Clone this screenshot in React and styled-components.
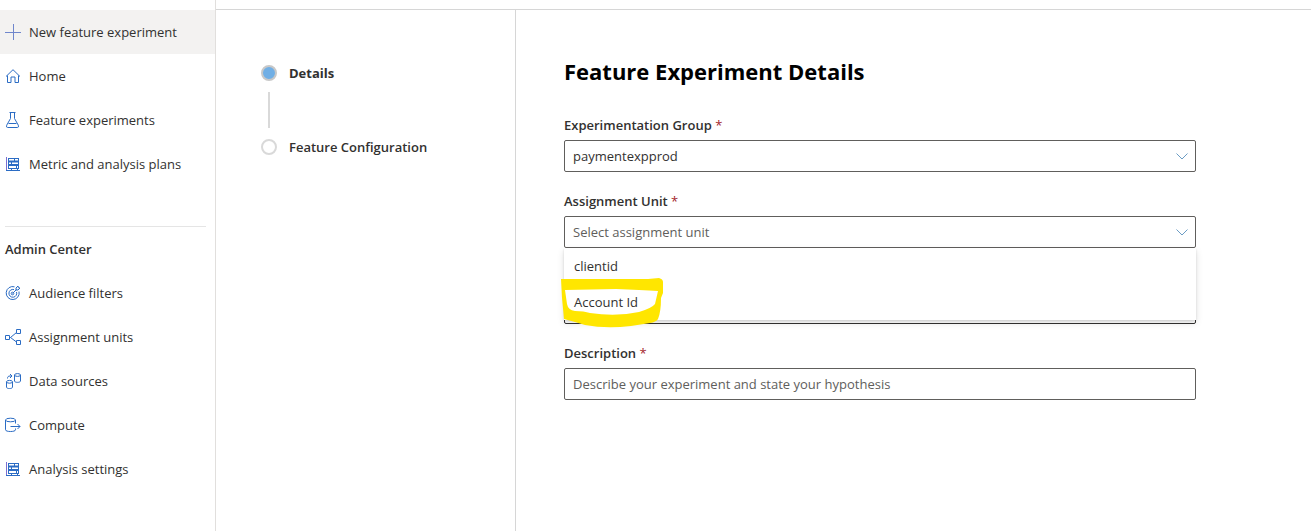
import React from "react";
import styled, { createGlobalStyle } from "styled-components";

const GlobalStyle = createGlobalStyle`
  *, *::before, *::after { box-sizing: border-box; }
  body {
    margin: 0;
    background: #fff;
    color: #323130;
    font: 400 13px/20px "Open Sans", "Noto Sans", sans-serif;
  }
  input, select, button { font: inherit; color: inherit; }
`;

const Page = styled.div`
  display: flex;
  min-height: 100vh;
`;

const Sidebar = styled.nav`
  flex: 0 0 216px;
  padding-top: 10px;
  border-right: 1px solid #e1dfdd;
`;

const NavLink = styled.a`
  display: flex;
  align-items: center;
  gap: 8px;
  height: 44px;
  padding-left: 5px;
  color: #323130;
  text-decoration: none;
  white-space: nowrap;
  background: ${(p) => (p.$active ? "#f3f2f1" : "transparent")};
`;

const NavHeading = styled.h2`
  margin: 0;
  padding-left: 5px;
  font-size: 13px;
  font-weight: 600;
  line-height: 44px;
`;

const Divider = styled.hr`
  margin: 40px 9px 0 5px;
  border: 0;
  border-top: 1px solid #e5e5e5;
`;

const NavIcon = styled.svg`
  flex: none;
  width: 16px;
  height: 16px;
  fill: none;
  stroke: #2b6cc4;
  stroke-width: 1;
`;

const Content = styled.div`
  display: flex;
  flex: 1;
  min-width: 0;
  margin-top: 9px;
  border-top: 1px solid #d6d6d6;
`;

const Stepper = styled.ol`
  flex: 0 0 300px;
  margin: 0;
  padding: 53px 0 0 45px;
  list-style: none;
  border-right: 1px solid #d6d6d6;
`;

const Step = styled.li`
  display: flex;
  align-items: center;
  gap: 12px;
  height: 20px;
  font-weight: ${(p) => (p.$current ? 700 : 600)};
`;

const StepDot = styled.span`
  width: 16px;
  height: 16px;
  border: 2px solid ${(p) => (p.$current ? "#c8c8c8" : "#d9d9d9")};
  border-radius: 50%;
  background: ${(p) => (p.$current ? "#71afe5" : "#fff")};
`;

const StepLine = styled.li`
  width: 2px;
  height: 36px;
  margin: 9px 0 9px 7px;
  background: #d9d9d9;
`;

const Main = styled.main`
  flex: 1;
  min-width: 0;
  padding: 45px 48px;
`;

const Title = styled.h1`
  margin: 0 0 28px;
  color: #000;
  font-size: 22px;
  font-weight: 700;
  line-height: 32px;
`;

const Form = styled.form`
  display: grid;
  gap: 19px;
  max-width: 632px;
`;

const Field = styled.div`
  display: flex;
  flex-direction: column;
  justify-content: flex-end;
  min-height: 57px;
`;

const Label = styled.label`
  margin-bottom: 5px;
  font-weight: 600;
`;

const Required = styled.span`
  color: #a4262c;
  font-weight: 400;
`;

const Control = styled.div`
  position: relative;
`;

const TextInput = styled.input`
  display: block;
  width: 100%;
  height: 32px;
  padding: 0 8px;
  border: 1px solid ${(p) => (p.$strong ? "#323130" : "#605e5c")};
  border-radius: 2px;
  background: #fff;
  outline: none;
  &::placeholder { color: #605e5c; opacity: 1; }
`;

const Select = styled.select`
  display: block;
  width: 100%;
  height: 32px;
  padding: 0 32px 0 8px;
  border: 1px solid #605e5c;
  border-radius: 2px;
  background: #fff;
  color: ${(p) => (p.$empty ? "#605e5c" : "#323130")};
  appearance: none;
  outline: none;
`;

const Chevron = styled.svg`
  position: absolute;
  top: 12px;
  right: 8px;
  width: 12px;
  height: 8px;
  fill: none;
  stroke: #6b9cc4;
  pointer-events: none;
`;

const Menu = styled.ul`
  position: absolute;
  z-index: 1;
  top: 100%;
  left: 0;
  right: 0;
  margin: 0;
  padding: 0;
  list-style: none;
  background: #fff;
  box-shadow: 0 3px 7px rgba(0, 0, 0, 0.13), 0 1px 2px rgba(0, 0, 0, 0.11);
`;

const Option = styled.li`
  position: relative;
  padding: 8px 10px;
`;

const Marker = styled.svg`
  position: absolute;
  top: -6px;
  left: -3px;
  width: 104px;
  height: 52px;
  pointer-events: none;
`;

const barsIcon = (
  <>
    <path d="M1.500 1v14" stroke="#7a6fd0" />
    <path d="M1 14.500h14" />
    <path d="M3 2.500h11M3 12.500h11" />
    <path d="M3 5.500h11M3 9h11" strokeWidth="2" />
    <path d="M3.500 2v11M13.500 2v11M9.500 2v4M6.500 6v3M11.500 9v4M6.500 12v3M12.500 12v3" />
  </>
);

const icons = {
  plus: <path d="M8.500 0v16M0 8.500h16" stroke="#6f86cc" />,
  home: <path d="M1 8.500 8 1.700l7 6.800M2.500 7.500v7h3.500V9h4v5.500h3.500v-7" />,
  flask: <path d="M4.500.5h6M5.500.5v6L1.700 13.200q-.9 2.300 1 2.300h9.600q1.900 0 1-2.300L9.500 6.500v-6M3.500 11.500h8" />,
  bars: barsIcon,
  target: (
    <>
      <path d="M9.500 1.800A6.500 6.500 0 1 0 14 6.500M9 4.600A3.900 3.900 0 1 0 11.500 7" />
      <circle cx="7.500" cy="8.500" r="1.300" />
      <path d="M7.500 8.500l4-4M11 5V3l2-2 .4 1.700L15 3l-2 2h-2" />
    </>
  ),
  nodes: (
    <>
      <path d="M.5 6.500h4v4h-4zM11.500.5h4v4h-4zM11.500 11.500h4v4h-4z" />
      <path d="M4.500 8.500h1L11.500 3.500M5.500 8.500l6 4.500" />
    </>
  ),
  sources: (
    <>
      <ellipse cx="12.500" cy="2" rx="3" ry="1.400" />
      <path d="M9.500 2v6c0 1.800 6 1.800 6 0V2" />
      <ellipse cx="4.500" cy="8.800" rx="3" ry="1.400" />
      <path d="M1.500 8.800v5.400c0 1.800 6 1.800 6 0V8.800M2.500 5.500c0-1.600.7-2.500 2.500-2.500h2M5 1l2 2-2 2" />
    </>
  ),
  compute: (
    <>
      <ellipse cx="5.500" cy="3" rx="5" ry="1.800" />
      <path d="M.5 3v9.800c0 2.300 10 2.300 10 0v-1.300M10.500 3v3.500M5.500 9.500H15M12.500 7l2.500 2.500-2.500 2.500" />
    </>
  ),
};

const mainLinks = [
  ["plus", "New feature experiment"],
  ["home", "Home"],
  ["flask", "Feature experiments"],
  ["bars", "Metric and analysis plans"],
];

const adminLinks = [
  ["target", "Audience filters"],
  ["nodes", "Assignment units"],
  ["sources", "Data sources"],
  ["compute", "Compute"],
  ["bars", "Analysis settings"],
];

function NavItem({ icon, label, active }) {
  return (
    <NavLink href="#" $active={active}>
      <NavIcon viewBox="0 0 16 16" aria-hidden="true">{icons[icon]}</NavIcon>
      {label}
    </NavLink>
  );
}

function Down() {
  return (
    <Chevron viewBox="0 0 12 8" aria-hidden="true">
      <path d="M.5 1.500 6 7l5.500-5.500" />
    </Chevron>
  );
}

export default function App() {
  return (
    <>
      <GlobalStyle />
      <Page>
        <Sidebar>
          {mainLinks.map(([icon, label], i) => (
            <NavItem key={label} icon={icon} label={label} active={i === 0} />
          ))}
          <Divider />
          <NavHeading>Admin Center</NavHeading>
          {adminLinks.map(([icon, label]) => (
            <NavItem key={label} icon={icon} label={label} />
          ))}
        </Sidebar>
        <Content>
          <Stepper>
            <Step $current aria-current="step"><StepDot $current />Details</Step>
            <StepLine aria-hidden="true" />
            <Step><StepDot />Feature Configuration</Step>
          </Stepper>
          <Main>
            <Title>Feature Experiment Details</Title>
            <Form>
              <Field>
                <Label htmlFor="group">Experimentation Group <Required>*</Required></Label>
                <Control>
                  <Select id="group" defaultValue="paymentexpprod">
                    <option>paymentexpprod</option>
                  </Select>
                  <Down />
                </Control>
              </Field>
              <Field>
                <Label htmlFor="unit">Assignment Unit <Required>*</Required></Label>
                <Control>
                  <Select id="unit" $empty defaultValue="">
                    <option value="">Select assignment unit</option>
                  </Select>
                  <Down />
                  <Menu role="listbox" aria-label="Assignment Unit">
                    <Option role="option" aria-selected="false">clientid</Option>
                    <Option role="option" aria-selected="false">
                      Account Id
                      <Marker viewBox="0 0 104 52" aria-hidden="true">
                        <path
                          fill="#ffe600"
                          fillRule="evenodd"
                          d="M0 1H87L98 0Q102 1 102 4V15L100 20Q100 34 97 41Q95 44 89 45L70 48Q45 51 24 47L14 44L3 41L1 20ZM4 12L6 26Q7 32 14 33Q23 33 29 35Q55 39 78 34Q91 30 94 26L97 13Q80 12 55 11Z"
                        />
                      </Marker>
                    </Option>
                  </Menu>
                </Control>
              </Field>
              <Field>
                <TextInput $strong aria-label="Name" />
              </Field>
              <Field>
                <Label htmlFor="description">Description <Required>*</Required></Label>
                <TextInput id="description" placeholder="Describe your experiment and state your hypothesis" />
              </Field>
            </Form>
          </Main>
        </Content>
      </Page>
    </>
  );
}
